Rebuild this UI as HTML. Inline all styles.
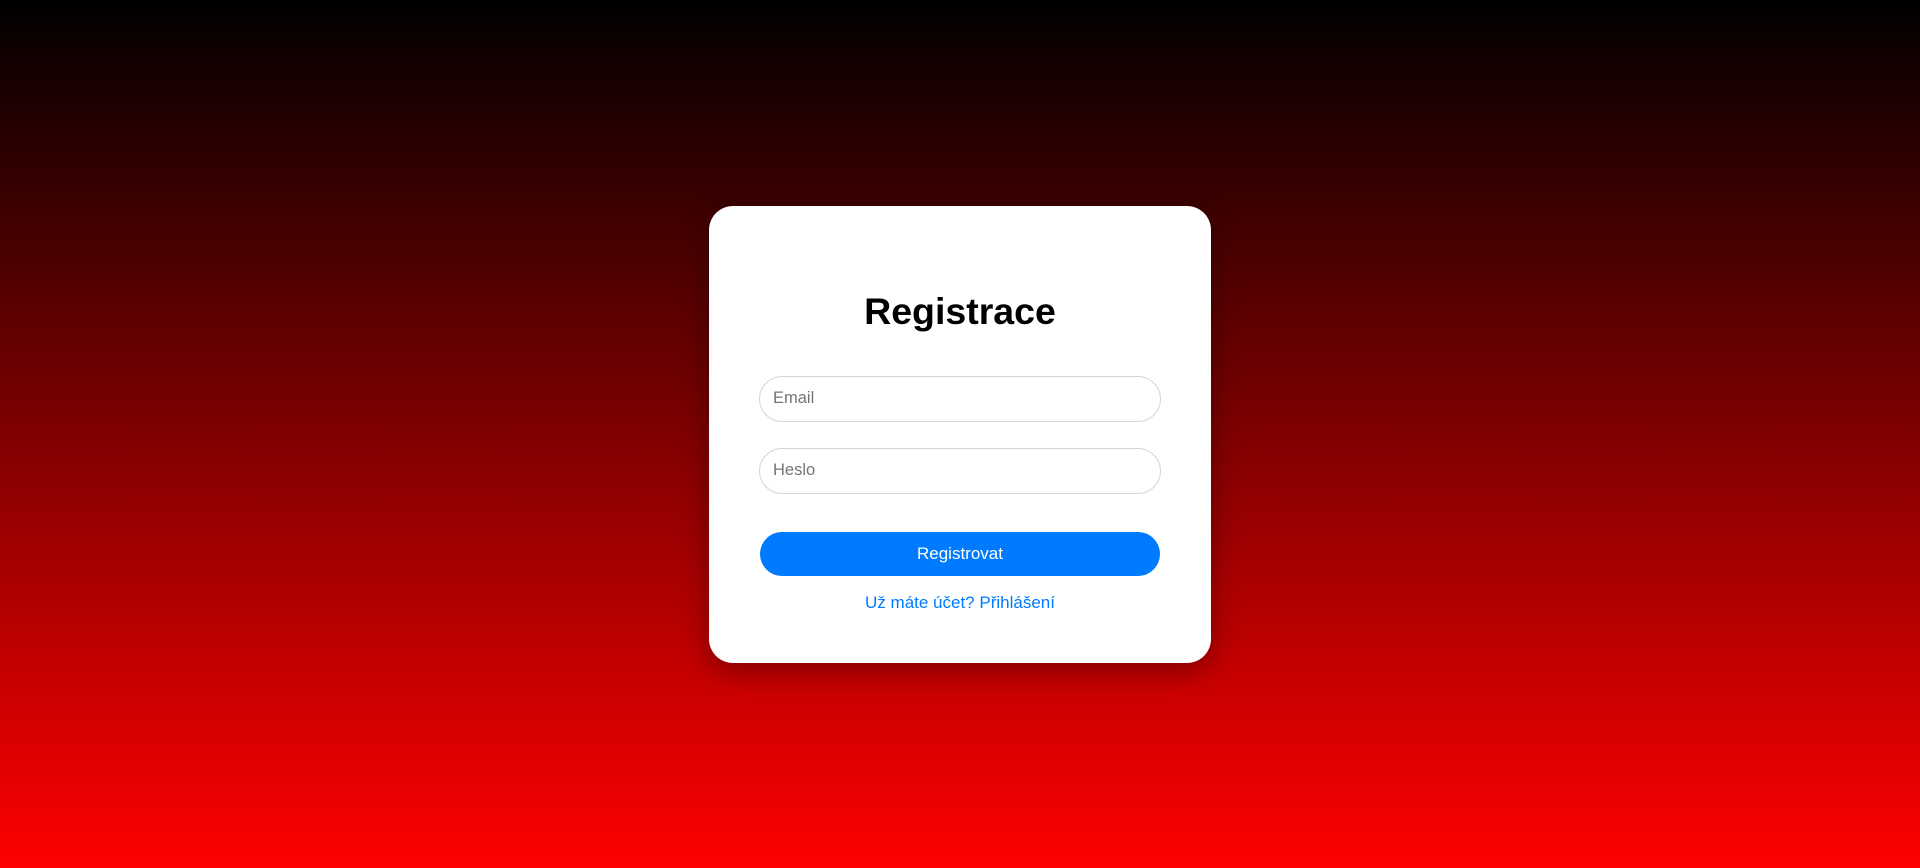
<!DOCTYPE html>
<html><head><meta charset="utf-8"><style>
html,body{margin:0;height:868px;width:1920px;overflow:hidden}
body{background:linear-gradient(to bottom,#000 0%,#ff0000 100%);font-family:"Liberation Sans",sans-serif;position:relative}
.card{position:absolute;left:709px;top:206px;width:502px;height:457px;background:#fff;border-radius:24px;box-shadow:0 8px 30px rgba(0,0,0,.35);box-sizing:border-box}
h1{margin:0;position:absolute;top:287px;text-align:center;font-size:37.5px;font-weight:bold;color:#000;line-height:48px}
.in{position:absolute;left:759px;width:402px;height:46px;border:1.5px solid #d5d5d5;border-radius:23px;box-sizing:border-box;font-size:16.5px;color:#757575;padding-left:13px;line-height:43px;background:#fff}
.btn{position:absolute;left:760px;top:532px;width:400px;height:44px;border-radius:22px;background:#007bff;color:#fff;font-size:17px;text-align:center;line-height:44px}
.link{position:absolute;left:709px;width:502px;top:591px;text-align:center;color:#007bff;font-size:17px;line-height:24px}
</style></head><body>
<div class="card"></div>
<h1 style="left:709px;width:502px">Registrace</h1>
<div class="in" style="top:376px">Email</div>
<div class="in" style="top:448px">Heslo</div>
<div class="btn">Registrovat</div>
<div class="link">Už máte účet? Přihlášení</div>
</body></html>
